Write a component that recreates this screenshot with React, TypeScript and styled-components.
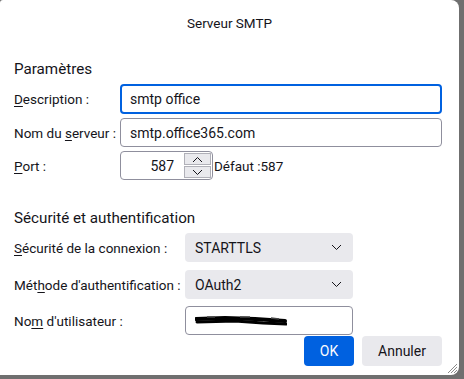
import React from "react";
import styled, { createGlobalStyle } from "styled-components";

const GlobalStyle = createGlobalStyle`
    html, body {
        margin: 0;
        padding: 0;
        background: #6f6f6f;
    }
    body {
        font-family: Roboto, "Liberation Sans", sans-serif;
        color: #15141a;
    }
`;

const Dialog = styled.div`
    position: relative;
    width: 459px;
    height: 375px;
    box-sizing: border-box;
    background: #ffffff;
    border-radius: 3px 8px 8px 0;
    padding: 0 17px 0 14px;
    display: flex;
    flex-direction: column;
`;

const Title = styled.div`
    text-align: center;
    font-size: 13.5px;
    height: 46px;
    line-height: 46px;
    padding-left: 3px;
`;

const SectionTitle = styled.div<{ $top: number }>`
    font-size: 15.2px;
    margin-top: ${(p) => p.$top}px;
    height: 22px;
    line-height: 22px;
    margin-bottom: 4px;
`;

const Row = styled.div<{ $label: number; $gap?: number }>`
    display: grid;
    grid-template-columns: ${(p) => p.$label}px 1fr;
    align-items: center;
    margin-bottom: ${(p) => p.$gap ?? 4}px;
`;

const Label = styled.label`
    font-size: 13.5px;
    white-space: nowrap;

    u {
        text-decoration-thickness: 1px;
        text-underline-offset: 2px;
    }
`;

const TextInput = styled.div<{ $focused?: boolean; $width?: number }>`
    box-sizing: border-box;
    height: ${(p) => (p.$focused ? 30 : 29)}px;
    width: ${(p) => (p.$width ? `${p.$width}px` : "100%")};
    border: ${(p) => (p.$focused ? "2px solid #0061e0" : "1px solid #8f8f9d")};
    border-radius: 4px;
    padding-left: ${(p) => (p.$focused ? 8 : 9)}px;
    font-size: 14px;
    display: flex;
    align-items: center;
    background: #ffffff;
`;

const PortGroup = styled.div`
    display: flex;
    align-items: center;
`;

const PortBox = styled.div`
    box-sizing: border-box;
    width: 93px;
    height: 29px;
    border: 1px solid #8f8f9d;
    border-radius: 4px;
    display: flex;
    align-items: stretch;
    font-size: 14px;
`;

const PortValue = styled.div`
    flex: 1;
    display: flex;
    align-items: center;
    justify-content: flex-end;
    padding-right: 10px;
`;

const Spinner = styled.div`
    width: 27px;
    display: flex;
    flex-direction: column;
    padding: 1px 1px 1px 0;
    gap: 1px;
`;

const SpinButton = styled.div`
    flex: 1;
    background: #e9e9ed;
    border: 1px solid #b0b0b8;
    display: flex;
    align-items: center;
    justify-content: center;
`;

const DefaultText = styled.span`
    font-size: 13.5px;
    margin-left: 1px;
`;

const Select = styled.div`
    box-sizing: border-box;
    width: 168px;
    height: 29px;
    background: #e9e9ed;
    border-radius: 4px;
    display: flex;
    align-items: center;
    justify-content: space-between;
    padding: 0 11px 0 10px;
    font-size: 14px;
`;

const Footer = styled.div`
    display: flex;
    justify-content: flex-end;
    gap: 8px;
    margin-top: 1px;
`;

const Button = styled.div<{ $primary?: boolean }>`
    height: 30px;
    width: ${(p) => (p.$primary ? 50 : 80)}px;
    border-radius: 4px;
    display: flex;
    align-items: center;
    justify-content: center;
    font-size: 14px;
    background: ${(p) => (p.$primary ? "#0061e0" : "#e9e9ed")};
    color: ${(p) => (p.$primary ? "#fbfbfe" : "#15141a")};
`;

const Grip = styled.svg`
    position: absolute;
    right: 1px;
    bottom: 1px;
`;

const Chevron = ({ up }: { up?: boolean }) => (
    <svg width="11" height="7" viewBox="0 0 11 7">
        <path
            d={up ? "M1 6 L5.5 1.5 L10 6" : "M1 1 L5.5 5.5 L10 1"}
            fill="none"
            stroke="#15141a"
            strokeWidth="1"
        />
    </svg>
);

// scribble covering the redacted user name
const Redacted = () => (
    <svg width="92" height="12" viewBox="0 0 92 12">
        <path d="M1 4 L30 3 L60 4 L90 6" stroke="#000" strokeWidth="4" fill="none" strokeLinecap="round" />
        <path d="M2 7 L40 6 L68 8 L91 9" stroke="#000" strokeWidth="3" fill="none" strokeLinecap="round" />
        <path d="M12 2 L20 2 M45 2 L55 2 M76 3 L84 4" stroke="#444" strokeWidth="1.5" fill="none" />
    </svg>
);

const App = () => {
    return (
        <>
            <GlobalStyle />
            <Dialog>
                <Title>Serveur SMTP</Title>

                <SectionTitle $top={12}>Paramètres</SectionTitle>
                <Row $label={106}>
                    <Label><u>D</u>escription :</Label>
                    <TextInput $focused>smtp office</TextInput>
                </Row>
                <Row $label={106}>
                    <Label>Nom du <u>s</u>erveur :</Label>
                    <TextInput>smtp.office365.com</TextInput>
                </Row>
                <Row $label={106}>
                    <Label><u>P</u>ort :</Label>
                    <PortGroup>
                        <PortBox>
                            <PortValue>587</PortValue>
                            <Spinner>
                                <SpinButton><Chevron up /></SpinButton>
                                <SpinButton><Chevron /></SpinButton>
                            </Spinner>
                        </PortBox>
                        <DefaultText>Défaut :587</DefaultText>
                    </PortGroup>
                </Row>

                <SectionTitle $top={23}>Sécurité et authentification</SectionTitle>
                <Row $label={171} $gap={8}>
                    <Label><u>S</u>écurité de la connexion :</Label>
                    <Select>
                        STARTTLS
                        <Chevron />
                    </Select>
                </Row>
                <Row $label={171} $gap={7}>
                    <Label>Mét<u>h</u>ode d'authentification :</Label>
                    <Select>
                        OAuth2
                        <Chevron />
                    </Select>
                </Row>
                <Row $label={171} $gap={0}>
                    <Label>No<u>m</u> d'utilisateur :</Label>
                    <TextInput $width={168}>
                        <Redacted />
                    </TextInput>
                </Row>

                <Footer>
                    <Button $primary>OK</Button>
                    <Button>Annuler</Button>
                </Footer>

                <Grip width="12" height="12" viewBox="0 0 12 12">
                    <path
                        d="M11 2 L2 11 M11 5 L5 11 M11 8 L8 11"
                        stroke="#8a8a8a"
                        strokeWidth="1"
                    />
                </Grip>
            </Dialog>
        </>
    );
};

export default App;
